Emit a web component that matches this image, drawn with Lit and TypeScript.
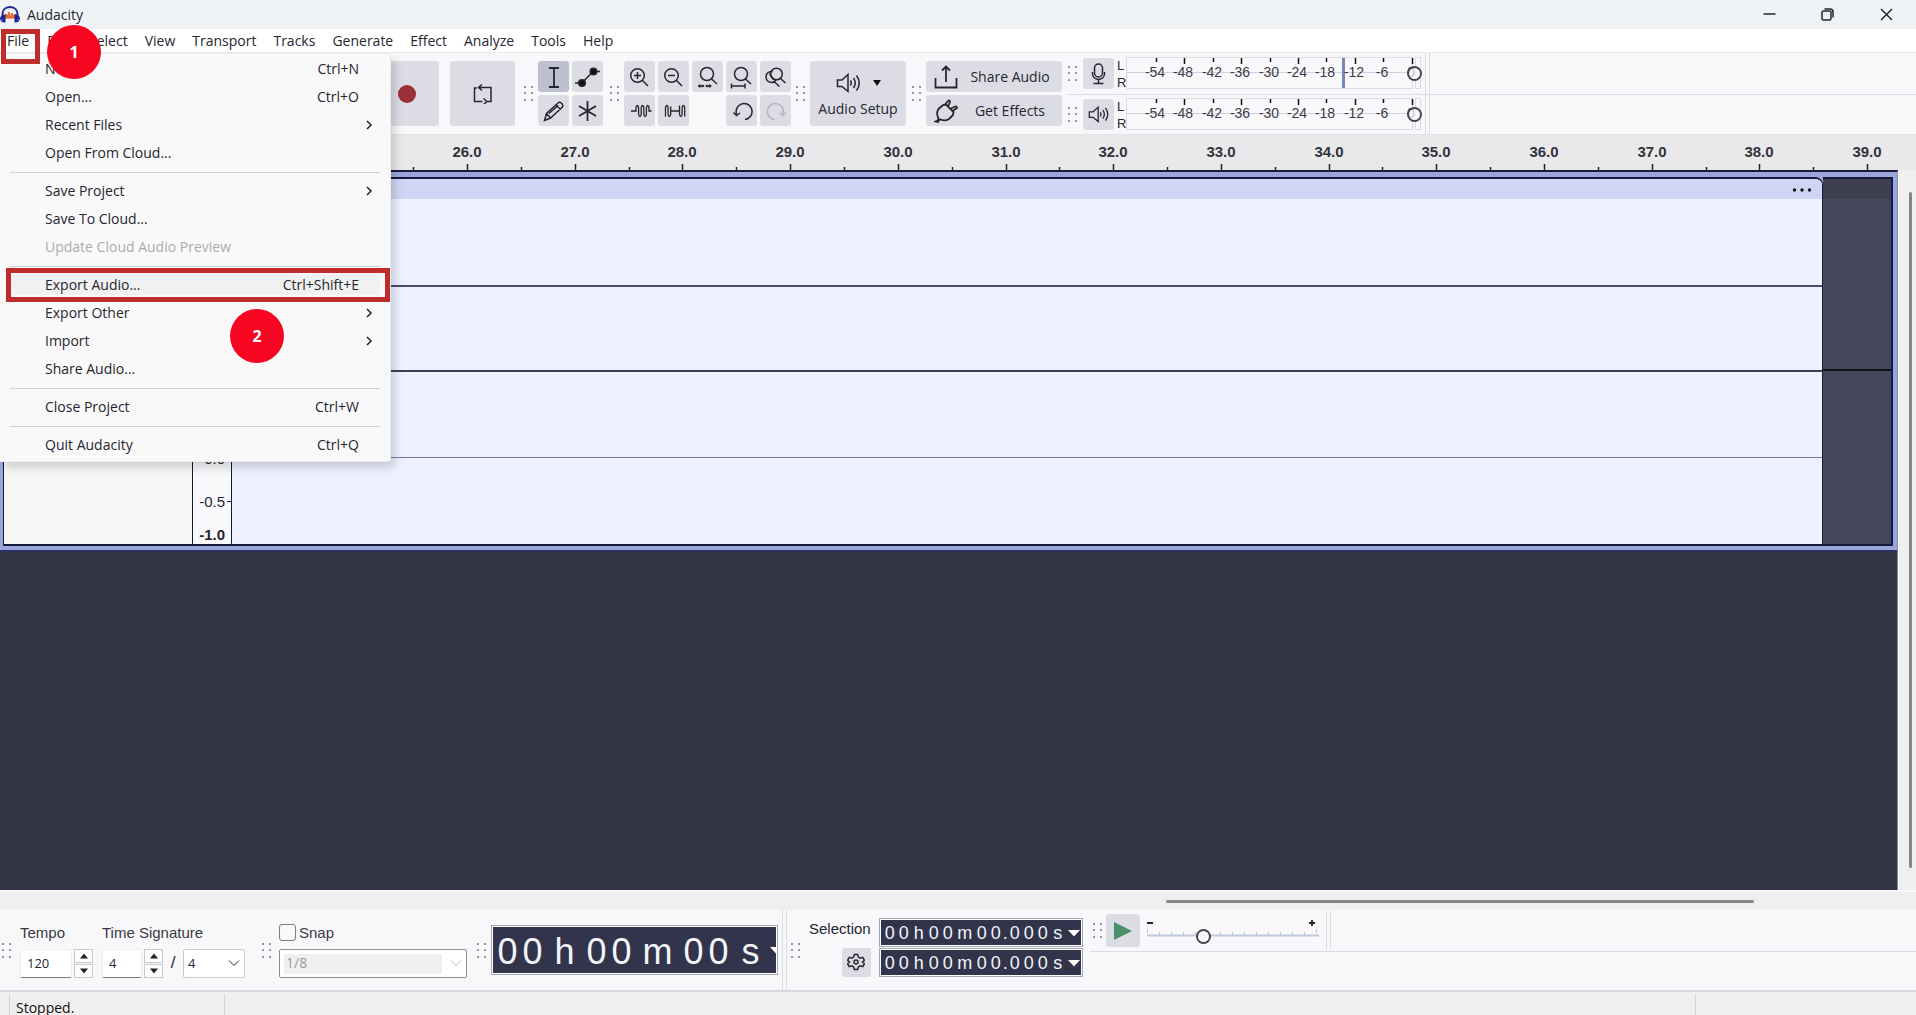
import { LitElement, html, svg, css, nothing } from "lit";
import { customElement, property } from "lit/decorators.js";

type Entry = { label: string; keys?: string; sub?: boolean; off?: boolean; hot?: boolean };

const FILE_MENU: Entry[][] = [
  [
    { label: "New", keys: "Ctrl+N" },
    { label: "Open...", keys: "Ctrl+O" },
    { label: "Recent Files", sub: true },
    { label: "Open From Cloud..." },
  ],
  [
    { label: "Save Project", sub: true },
    { label: "Save To Cloud..." },
    { label: "Update Cloud Audio Preview", off: true },
  ],
  [
    { label: "Export Audio...", keys: "Ctrl+Shift+E", hot: true },
    { label: "Export Other", sub: true },
    { label: "Import", sub: true },
    { label: "Share Audio..." },
  ],
  [{ label: "Close Project", keys: "Ctrl+W" }],
  [{ label: "Quit Audacity", keys: "Ctrl+Q" }],
];

const MENUS = ["File", "Edit", "Select", "View", "Transport", "Tracks", "Generate", "Effect", "Analyze", "Tools", "Help"];

const icon = (w: number, h: number, body: unknown) =>
  html`<svg class="icon" width=${w} height=${h} viewBox="0 0 ${w} ${h}" aria-hidden="true">${body}</svg>`;

const grip = () =>
  html`<svg class="grip" width="9" height="15" viewBox="0 0 9 15" aria-hidden="true">
    ${[1, 8].map((x) => [1, 7, 14].map((y) => svg`<circle cx=${x} cy=${y} r="1.1" fill="#85859a" />`))}
  </svg>`;

const speaker = svg`<path d="M1.5 8v6.500h4.500l6 5V2.500l-6 5.500z" />
  <path d="M14.500 8.500q1.500 2.500 0 5M17.500 6q3.500 5 0 10M20.500 3.500q5.500 7.500 0 15" />`;

const ICONS = {
  select: svg`<path d="M11 7h4.500l.5 1 .5-1H21M16 8v17M11 26h4.500l.5-1 .5 1H21" stroke-width="1.8" />`,
  envelope: svg`<path d="M3 22h7L21 10.500h7" /><circle cx="10" cy="22" r="3.300" fill="#111" /><circle cx="21.500" cy="10.500" r="3.300" fill="#111" />`,
  draw: svg`<path d="M6.500 25.500l2-7L20 8q1.500-1.300 3.200 0l1 1q1.300 1.700 0 3.200L12.500 23zM8.500 18.500l4 4.500M18 10l4.500 4.500M11 18.500L20 10.500" />`,
  multi: svg`<path d="M15.500 6v20M7 11l17 10M24 11L7 21" stroke-width="1.800" />`,
  zoomIn: svg`<circle cx="13.500" cy="14.500" r="6.800" /><path d="M18.500 19.500l5.500 5.500M10 14.500h7M13.500 11v7" />`,
  zoomOut: svg`<circle cx="13.500" cy="14.500" r="6.800" /><path d="M18.500 19.500l5.500 5.500M10 14.500h7" />`,
  fitSel: svg`<circle cx="15" cy="13" r="6.500" /><path d="M19.500 18l5.500 5M6.500 25h5.500M14 25h5" /><path d="M5.500 25l3-2v4zM20 25l-3-2v4zM12.500 25l-2.500-1.500v3zM13 25l2.500-1.500v3z" fill="#222" stroke="none" />`,
  fitAll: svg`<circle cx="15" cy="13" r="6.500" /><path d="M19.500 18l5.500 5M5.500 25h13.500M5.500 22.500v5M19 22.500v5" />`,
  toggle: svg`<circle cx="16.500" cy="13" r="5.800" /><path d="M20.500 17.500l5 4.500M12.500 10.500q-6 0-6.500 5 0 5.500 5.500 6 3 0 4.500-2.500M14 20.500l5.500 5M9.500 12.500l4 6" />`,
  trim: svg`<path d="M7 16h5v-3.500q1.300-4 2.600 0v7q1.300 4 2.600 0v-7q1.300-4 2.600 0v7q1.300 4 2.600 0v-7q1.300-4 2.600 0V16h2.600" stroke-width="1.300" />`,
  silence: svg`<path d="M7.500 21.500v-9q1.300-4 2.600 0v7q1.300 4 2.600 0v-8M13 16h8.500M21.500 10.500v9q1.300 4 2.600 0v-7q1.300-4 2.600 0v9" stroke-width="1.300" />`,
  undo: svg`<path d="M10.500 19a8 8 0 1 1 11.500 4.500q-1.500.8-3 .8M7.500 17.500l3 3 3.500-2.500" />`,
  redo: svg`<path d="M23 19a8 8 0 1 0-11.500 4.500q1.500.8 3 .8M26 17.500l-3 3-3.500-2.500" stroke="#b3b5bf" />`,
  mic: svg`<rect x="11.500" y="6" width="8" height="13" rx="4" /><path d="M9.500 14v2q.5 5 6 5.500 5.500-.5 6-5.500v-2M15.500 21.500V25M10.500 25.500h10" />`,
};

@customElement("app-root")
export class AppRoot extends LitElement {
  @property({ type: Number }) start = 25;

  private tool(name: keyof typeof ICONS, label: string, on = false, off = false) {
    return html`<button class="btn tool ${on ? "on" : ""}" aria-label=${label} ?disabled=${off}>${icon(31, 31, ICONS[name])}</button>`;
  }

  private menuBar() {
    return html`<nav class="menubar" aria-label="Main menu">
      ${MENUS.map((m) => html`<button class="menu-name">${m}</button>`)}
      <div class="popup" role="menu">
        ${FILE_MENU.map(
          (group, i) => html`${i ? html`<hr class="sep" />` : nothing}
          ${group.map(
            (e) => html`<button role="menuitem" class="item ${e.hot ? "hot" : ""}" ?disabled=${e.off}>
              <span>${e.label}</span><span>${e.keys ?? ""}</span>
              <span class="sub">${e.sub ? icon(8, 12, svg`<path d="M2 2l4 4-4 4" />`) : nothing}</span>
            </button>`
          )}`
        )}
      </div>
      <span class="mark-file"></span>
      <span class="badge one">1</span>
      <span class="badge two">2</span>
    </nav>`;
  }

  private meter(name: string, glyph: unknown, peak: boolean) {
    const labels = [-54, -48, -42, -36, -30, -24, -18, -12, -6, 0];
    return html`<div class="meter-row">
      ${grip()}
      <button class="btn tool" aria-label="${name} level">${glyph}</button>
      <div class="lr"><span>L</span><span>R</span></div>
      <div class="meter">
        <svg width="296" height="33" viewBox="0 0 296 33" aria-hidden="true">
          <path d="M.5.500h286v31H.5zM289.500.500h5v31h-5z" fill="#f9f9fb" stroke="#d9dae2" />
          <path d="M0 15.500h286" stroke="#cfd3e0" />
          ${peak ? svg`<path d="M217.500 1v30" stroke="#7686b8" stroke-width="3" />` : nothing}
          ${labels.map((v, i) => {
            const x = Math.round(30 + i * 28.4);
            return svg`<path d="M${x + 0.5} 1v${v % 12 ? 4 : 6}" stroke="#111" stroke-width="1.500" />
              <text class="db" x=${x - 1} y="20" text-anchor="middle">${v}</text>`;
          })}
        </svg>
        <input class="knob" type="range" aria-label="${name} volume" value="100" />
      </div>
    </div>`;
  }

  private toolbar() {
    return html`<section class="toolbar">
      <div class="group transport">
        ${grip()}
        <div class="big-row">
          <button class="btn big" aria-label="Pause">${icon(20, 20, svg`<path d="M6 3v14M14 3v14" />`)}</button>
          <button class="btn big" aria-label="Play">${icon(20, 20, svg`<path d="M5 3l11 7-11 7z" />`)}</button>
          <button class="btn big" aria-label="Stop">${icon(20, 20, svg`<path d="M4 4h12v12H4z" />`)}</button>
          <button class="btn big" aria-label="Skip to Start">${icon(20, 20, svg`<path d="M4 3v14M16 3L6 10l10 7z" />`)}</button>
          <button class="btn big" aria-label="Skip to End">${icon(20, 20, svg`<path d="M16 3v14M4 3l10 7-10 7z" />`)}</button>
          <button class="btn big" aria-label="Record">${icon(20, 20, svg`<circle cx="10" cy="10" r="9" fill="#9b3038" stroke="none" />`)}</button>
        </div>
        <button class="btn big" aria-label="Loop">
          ${icon(20, 20, svg`<path d="M4 4H1.500v13.500h8M14.500 17.500h3.500V3.500H6M9 .5l-3.500 3L9 6.500M10.500 14.500l3.500 3-3.500 3" />`)}
        </button>
      </div>
      ${grip()}
      <div class="tools two-col">
        ${this.tool("select", "Selection Tool", true)}${this.tool("envelope", "Envelope Tool")}
        ${this.tool("draw", "Draw Tool")}${this.tool("multi", "Multi-Tool")}
      </div>
      ${grip()}
      <div class="tools five-col">
        ${this.tool("zoomIn", "Zoom In")}${this.tool("zoomOut", "Zoom Out")}${this.tool("fitSel", "Fit Selection")}
        ${this.tool("fitAll", "Fit Project")}${this.tool("toggle", "Zoom Toggle")}
        ${this.tool("trim", "Trim")}${this.tool("silence", "Silence")}<span></span>
        ${this.tool("undo", "Undo")}${this.tool("redo", "Redo", false, true)}
      </div>
      ${grip()}
      <button class="btn setup">
        <span class="setup-icons">${icon(26, 22, speaker)}${icon(8, 8, svg`<path d="M0 1h8L4 7z" fill="#111" stroke="none" />`)}</span>
        Audio Setup
      </button>
      ${grip()}
      <div class="share">
        <button class="btn wide">
          ${icon(24, 24, svg`<path d="M1.500 13v9.500h21V13M12 17V1.500M8 5.500l4-4 4 4" stroke-width="1.800" />`)}<span>Share Audio</span>
        </button>
        <button class="btn wide">
          ${icon(24, 24, svg`<path d="M1.500 22.500q3-1 3-3Q1.500 13 5 9.500L9 6l3-.500 7.500 7.500-.500 3-4 4q-4 2.500-8.500.500-2 0-2.500 2.500zM11 5.500l3.500-4q1.500-.5 1.500 1.500l-2 4.500M18.500 12l4.500-3q0-2-2-1.500l-4 2" stroke-width="1.800" />`)}<span>Get Effects</span>
        </button>
      </div>
      <div class="meters">
        <div class="meters-line">${this.meter("Recording", icon(31, 31, ICONS.mic), true)}</div>
        <div class="meters-line">${this.meter("Playback", icon(22, 20, svg`<g transform="scale(.85)">${speaker}</g>`), false)}</div>
      </div>
    </section>`;
  }

  /** Seconds scale: one long tick per second, one short tick between. */
  private ruler() {
    const marks = Array.from({ length: 30 }, (_, i) => this.start + i * 0.5);
    return html`<svg class="ruler" width="100%" height="36" aria-hidden="true">
      ${marks.map((t) => {
        const x = Math.round(467 + (t - 26) * 107.7);
        const whole = Number.isInteger(t);
        return svg`<path d="M${x + 0.5} ${whole ? 29 : 32}V36" stroke="#222" stroke-width="1.500" />
          ${whole ? svg`<text class="sec" x=${x} y="22" text-anchor="middle">${t.toFixed(1)}</text>` : nothing}`;
      })}
    </svg>`;
  }

  private tracks() {
    return html`<section class="workspace">
      <div class="canvas">
        <div class="track">
          <div class="panel"></div>
          <div class="scale"><span>0.0</span><span class="half">-0.5</span><span class="min">-1.0</span></div>
          <div class="clip">
            <div class="clip-head">
              <button class="dots" aria-label="Clip menu">${icon(20, 6, svg`<g fill="#111" stroke="none"><circle cx="2.500" cy="3" r="1.700" /><circle cx="10" cy="3" r="1.700" /><circle cx="17.500" cy="3" r="1.700" /></g>`)}</button>
            </div>
            <div class="wave mid"></div><div class="wave end"></div>
            <div class="wave thin"></div><div class="wave"></div>
          </div>
          <div class="empty"><div class="empty-head"></div><div class="empty-half"></div></div>
        </div>
      </div>
      <div class="vbar"><div class="vthumb"></div></div>
      <div class="hbar"><div class="hthumb"></div></div>
    </section>`;
  }

  private digits(text: string) {
    return [...text].map((c) => html`<span class=${c === "." ? "dot" : c === "m" ? "m" : /\d/.test(c) ? "d" : "u"}>${c}</span>`);
  }

  private time(text: string, cls: string, label: string) {
    return html`<div class="time ${cls}" role="timer" aria-label=${label}>
      ${this.digits(text)}
      <button class="drop" aria-label="${label} format">${icon(12, 8, svg`<path d="M0 1h12L6 7.500z" fill="#fff" stroke="none" />`)}</button>
    </div>`;
  }

  private spinner(label: string) {
    return html`<div class="spinner">
      <button aria-label="Increase ${label}">${icon(8, 6, svg`<path d="M0 5.500h8L4 .5z" fill="#222" stroke="none" />`)}</button>
      <button aria-label="Decrease ${label}">${icon(8, 6, svg`<path d="M0 .5h8L4 5.500z" fill="#222" stroke="none" />`)}</button>
    </div>`;
  }

  private bottom() {
    const chevron = icon(12, 8, svg`<path d="M1 1.500l5 5 5-5" />`);
    return html`<section class="bottom">
      ${grip()}
      <div class="field tempo">
        <label for="tempo">Tempo</label>
        <div class="row"><input id="tempo" class="num wide-num" value="120" />${this.spinner("tempo")}</div>
      </div>
      <div class="field sig">
        <label for="beats">Time Signature</label>
        <div class="row">
          <input id="beats" class="num" value="4" />${this.spinner("beats")}
          <span class="slash">/</span>
          <div class="pick"><select aria-label="Beat unit"><option>4</option></select>${chevron}</div>
        </div>
      </div>
      ${grip()}
      <div class="field snap">
        <label class="check"><input type="checkbox" />Snap</label>
        <div class="pick off"><select aria-label="Snap to" disabled><option>1/8</option></select>${chevron}</div>
      </div>
      ${grip()}
      ${this.time("00h00m00s", "large", "Time")}
      <div class="divider"></div>
      ${grip()}
      <div class="selection">
        <div class="sel-side"><span>Selection</span>
          <button class="gear" aria-label="Selection options">
            ${icon(18, 18, svg`<path d="M7.300 1.500h3.400l.7 2.600 1.800 1 2.500-.7 1.700 2.900-1.900 1.700v0l1.900 1.700-1.700 2.900-2.500-.7-1.800 1-.7 2.600H7.300l-.7-2.600-1.800-1-2.500.7-1.700-2.900L2.500 9 .6 7.300l1.700-2.900 2.500.7 1.800-1z" /><circle cx="9" cy="9" r="2" />`)}
          </button>
        </div>
        <div class="sel-times">
          ${this.time("00h00m00.000s", "small", "Selection start")}${this.time("00h00m00.000s", "small", "Selection end")}
        </div>
      </div>
      <div class="tail">
        <div class="speed">
          ${grip()}
          <button class="btn play" aria-label="Play at speed">${icon(18, 18, svg`<path d="M0 0l18 9L0 18z" fill="#4b8f6b" stroke="none" />`)}</button>
          <div class="rate">
            <svg width="172" height="33" viewBox="0 0 172 33" aria-hidden="true">
              <path d="M0 9h6M162 9h6M165 6v6" stroke="#222" stroke-width="1.800" />
              <path d="M0 21.500h172" stroke="#c0c9de" stroke-width="2" />
              ${Array.from({ length: 15 }, (_, i) => svg`<path d="M${0.5 + Math.round(i * 12.1)} ${i % 14 ? 18 : 15}v4" stroke="#c0c9de" />`)}
            </svg>
            <input class="knob" type="range" aria-label="Playback speed" value="33" />
          </div>
          <div class="divider short"></div>
        </div>
        <div class="tail-rest"></div>
      </div>
    </section>`;
  }

  render() {
    return html`
      <header class="titlebar">
        <svg width="20" height="18" viewBox="0 0 20 18" aria-hidden="true">
          <path d="M4 10l2-2 1 3 2-5 1.500 6 1.500-5 1.500 3 2-2v4H4z" fill="#f0772b" stroke="#e8552a" />
          <path d="M2.500 10C2 4 5 1 10 1s8 3 7.500 9" fill="none" stroke="#20249a" stroke-width="1.800" />
          <path d="M5.500 8.500v8q-5 .5-5.500-4 .5-4 5.500-4zM14.500 8.500v8q5 .5 5.500-4-.5-4-5.500-4z" fill="#1d2290" />
          <path d="M2 13v2M18 13v2" stroke="#7f8be0" />
        </svg>
        <span class="title">Audacity</span>
        <button aria-label="Minimize">${icon(13, 13, svg`<path d="M.5 6h12" />`)}</button>
        <button aria-label="Restore">${icon(13, 13, svg`<rect x="1" y="3" width="9" height="9" rx="1.500" /><path d="M3.500 1H9q3 0 3 3v5.500" />`)}</button>
        <button aria-label="Close">${icon(13, 13, svg`<path d="M1 1l11 11M12 1L1 12" />`)}</button>
      </header>
      ${this.menuBar()} ${this.toolbar()} ${this.ruler()} ${this.tracks()} ${this.bottom()}
      <footer class="status"><span class="cell gap"></span><span class="cell state">Stopped.</span><span class="cell grow"></span><span class="cell last"></span></footer>
    `;
  }

  static styles = css`
    :host {
      display: flex;
      flex-direction: column;
      min-height: 100vh;
      overflow: hidden;
      background: #f8f8fa;
      color: #262630;
      font-family: "Open Sans", "Noto Sans", sans-serif;
      font-size: 14px;
      line-height: 20px;
    }
    * { box-sizing: border-box; }
    button { font: inherit; color: inherit; border: 0; padding: 0; background: none; }
    input, select { font: inherit; color: inherit; margin: 0; }
    svg { display: block; flex: none; }
    .icon { fill: none; stroke: #26262e; stroke-width: 1.5; }
    label { color: #3a3a44; }

    .titlebar { display: flex; align-items: center; height: 29px; background: #eff3f6; }
    .title { margin-left: 7px; flex: 1; }
    .titlebar button { display: grid; place-items: center; width: 58px; height: 29px; }
    .titlebar button:last-child { width: 60px; }

    .menubar { position: relative; z-index: 2; display: flex; height: 23px; background: #fff; }
    .menu-name { padding: 0 8px 0 9px; line-height: 24px; white-space: nowrap; }
    .menu-name:first-child { padding: 0 9px 0 7px; }
    .popup {
      position: absolute; left: 0; top: 24px; width: 391px; padding: 1px 4px 2px;
      background: #f9f9f9; border: 1px solid #ececee; border-left: 0; border-radius: 0 4px 4px 0;
      box-shadow: 4px 6px 10px rgba(0, 0, 0, 0.16);
    }
    .item {
      position: relative; display: grid; grid-template-columns: 1fr auto 27px; align-items: center;
      width: 100%; height: 28px; padding-left: 41px; text-align: left;
    }
    .item:disabled { color: #acacac; }
    .sub { padding-left: 6px; }
    .sep { height: 1px; margin: 5px 6px 4px; border: 0; background: #d0d0d2; }
    .hot { background: linear-gradient(#f1f1f1, #f1f1f1) 6px 4px / 370px 20px no-repeat; }
    .hot::after { content: ""; position: absolute; inset: -3px -4px -3px 2px; border: 5px solid #bf2c2c; }
    .mark-file { position: absolute; left: 1px; top: 0; width: 39px; height: 35px; border: 5px solid #bf2c2c; }
    .badge {
      position: absolute; display: grid; place-items: center; width: 54px; height: 54px; border-radius: 50%;
      background: #f80522; color: #fff; font-weight: 700; font-size: 16px;
    }
    .one { left: 47px; top: -4px; }
    .two { left: 230px; top: 280px; }

    .toolbar { display: flex; align-items: center; height: 82px; border-top: 1px solid #ececf0; }
    .group, .big-row { display: flex; align-items: center; }
    .transport { padding-left: 3px; margin-right: 9px; }
    .big-row { gap: 5px; margin: 0 11px 0 12px; }
    .btn { display: grid; place-items: center; border-radius: 3px; background: #dcdde4; }
    .btn.on { background: #bcc0d0; }
    .big { width: 65px; height: 65px; }
    .tools { display: grid; gap: 3px; margin: 0 7px 0 5px; }
    .two-col { grid-template-columns: repeat(2, 31px); }
    .five-col { grid-template-columns: repeat(5, 31px); margin-right: 5px; }
    .tool { width: 31px; height: 31px; }
    .setup { width: 96px; height: 65px; padding: 9px 0 5px; margin: 0 6px 0 5px; }
    .setup-icons { display: flex; align-items: center; gap: 11px; }
    .share { display: grid; gap: 3px; margin-left: 5px; }
    .wide { grid-template-columns: 24px 1fr; width: 136px; height: 31px; padding: 0 8px; column-gap: 8px; }
    .meters { flex: 1; align-self: flex-start; margin-left: 5px; }
    .meters-line { display: flex; height: 41px; }
    .meters-line + .meters-line { border-top: 1px solid #dcdce4; height: 40px; }
    .meter-row { display: flex; align-items: center; padding: 0 4px 0 1px; border-right: 1px solid #dcdce4; box-shadow: 3px 0 0 #f8f8fa, 4px 0 0 #dcdce4; }
    .meter-row .btn { margin: 0 3px 0 6px; }
    .lr { display: grid; width: 9px; font: 13px/17px "Liberation Sans", sans-serif; }
    .meter { display: grid; width: 295px; }
    .meter svg, .meter input { grid-area: 1 / 1; }
    .db { font: 14px "Liberation Sans", sans-serif; fill: #3a3a46; }
    .knob { appearance: none; align-self: center; height: 18px; background: none; }
    .knob::-webkit-slider-thumb { appearance: none; width: 15px; height: 15px; border: 2px solid #44464c; border-radius: 50%; background: rgba(255, 255, 255, 0.7); }
    .meter .knob { width: 296px; }

    .ruler { background: #e9e9ec; border-top: 1px solid #e2e2e6; }
    .sec { font: 700 15px "Liberation Sans", sans-serif; fill: #33333b; }

    .workspace { flex: 1; display: grid; grid-template: 1fr 20px / 1fr 18px; background: #efefef; }
    .canvas { background: #313545; border-top: 2px solid #141a38; border-right: 1px solid #8a8a92; }
    .track {
      display: flex; height: 380px; padding: 5px 4px 4px 3px; background: #9aa6dc;
      border-bottom: 2px solid #2b3260;
    }
    .track > * { border-top: 2px solid #141a38; border-bottom: 2px solid #141a38; }
    .panel { width: 189px; background: #f7f7f8; border-left: 1px solid #141a38; }
    .scale {
      display: flex; flex-direction: column; justify-content: flex-end; width: 40px; padding-right: 6px;
      background: #f9f9fb; border-left: 1px solid #141a38; border-right: 1px solid #141a38;
      font: 15px/17px "Liberation Sans", sans-serif; text-align: right; gap: 26px;
    }
    .half { background: linear-gradient(#141a38, #141a38) 100% 8px / 4px 1px no-repeat; margin-right: -6px; padding-right: 6px; }
    .min { font-weight: 700; margin-top: -10px; margin-bottom: 1px; }
    .clip { flex: 1; display: flex; flex-direction: column; border-right: 1px solid #141a38; border-radius: 0 8px 0 0; background: #eef1ff; }
    .clip-head { display: flex; justify-content: flex-end; align-items: center; height: 20px; padding: 2px 10px 0 0; background: #cfd6f4; border-radius: 0 6px 0 0; }
    .wave { flex: 1; }
    .mid { border-bottom: 2px solid #4a4c6c; }
    .wave.end { flex: 0 0 85px; border-bottom: 2px solid #3e4050; }
    .thin { border-bottom: 1px solid #75789a; }
    .empty { width: 70px; display: flex; flex-direction: column; background: #45475b; border-right: 2px solid #141a50; }
    .empty-head { height: 20px; background: #3e4052; }
    .empty-half { height: 172px; border-bottom: 2px solid #14141c; }
    .vbar { padding: 22px 4px 5px 10px; border-left: 1px solid #fff; }
    .vthumb { width: 3px; height: 676px; background: #868686; border-radius: 2px; }
    .hbar { grid-column: 1 / -1; padding-top: 8px; border-top: 2px solid #fafafa; display: flex; justify-content: flex-end; padding-right: 162px; }
    .hthumb { width: 588px; height: 3px; background: #868686; border-radius: 2px; }

    .bottom {
      display: flex; align-items: center; height: 82px; padding-left: 2px;
      border-bottom: 2px solid #d9dae0; font-family: "Liberation Sans", sans-serif; font-size: 15px;
    }
    .field { display: grid; gap: 6px; }
    .tempo { margin-left: 9px; }
    .sig { margin: 0 17px 0 9px; }
    .row { display: flex; align-items: center; }
    .num, .pick, .time { font-family: "Open Sans", sans-serif; }
    .num { width: 40px; height: 29px; padding: 0 6px; font-size: 13px; background: #fff; border: 1px solid #ececec; border-bottom: 1px solid #7a7a7a; border-radius: 2px; }
    .wide-num { width: 52px; }
    .spinner { display: grid; gap: 1px; margin-left: 2px; width: 19px; }
    .spinner button { display: grid; place-items: center; height: 14px; border: 1px solid #c9c9cd; background: #fdfdfd; }
    .slash { width: 20px; text-align: center; font-size: 17px; }
    .pick { display: grid; align-items: center; width: 62px; height: 29px; background: #fff; border: 1px solid #c9c9cd; border-radius: 2px; font-size: 13px; }
    .pick > * { grid-area: 1 / 1; }
    .pick select { appearance: none; width: 100%; height: 100%; padding: 0 4px; border: 0; background: none; }
    .pick svg { justify-self: end; margin-right: 4px; stroke-width: 1; }
    .snap { margin: 0 10px 0 8px; }
    .off { width: 188px; border-color: #8c8c92; }
    .pick.off select { background: linear-gradient(#f0f0f0, #f0f0f0) 4px 4px / 158px 20px no-repeat; color: #9a9a9a; opacity: 1; padding-left: 6px; font-size: 14px; }
    .off svg { stroke: #b9b9b9; }
    .check { display: flex; align-items: center; gap: 3px; }
    .check input { appearance: none; width: 17px; height: 17px; border: 1px solid #7d7d82; border-radius: 3px; background: #fafafa; }
    .time {
      display: flex; align-items: center; background: #31344a; color: #f3f3fa;
      border: 1px solid #a5a7b4; box-shadow: inset 0 0 0 1px #fff; font-family: "Liberation Sans", sans-serif; text-align: center; overflow: hidden;
    }
    .time > * { flex: none; }
    .large { width: 287px; height: 50px; margin: 0 4px 0 5px; padding-left: 3px; font-size: 36px; }
    .large span { padding-top: 4px; }
    .large .d { width: 25px; }
    .large .u { width: 39px; }
    .large .m { width: 47px; }
    .small { width: 204px; height: 29px; padding-left: 3px; font-size: 18px; }
    .small .d { width: 14px; }
    .small .u { width: 16px; }
    .small .m { width: 20px; }
    .small .dot { width: 5px; }
    .small .drop { margin-left: 2px; }
    .divider { width: 5px; height: 80px; margin-right: 4px; border: 1px solid #dcdce4; border-width: 0 1px; }
    .selection { display: flex; align-items: center; gap: 8px; margin: 0 0 5px 9px; }
    .sel-side { display: grid; justify-items: end; align-content: space-between; height: 58px; }
    .gear { display: grid; place-items: center; width: 29px; height: 29px; background: #dcdde4; border-radius: 2px; }
    .sel-times { display: grid; gap: 1px; }
    .tail { flex: 1; display: flex; flex-direction: column; height: 80px; margin-left: 7px; }
    .speed { display: flex; align-items: center; height: 41px; padding-left: 3px; }
    .tail-rest { flex: 1; border-top: 1px solid #dcdce4; }
    .play { width: 34px; height: 33px; margin: 0 7px 0 4px; }
    .rate { display: grid; width: 172px; }
    .rate > * { grid-area: 1 / 1; }
    .rate svg { align-self: center; }
    .rate .knob { width: 186px; margin: 11px 0 0 -7px; }
    .short { height: 39px; margin-left: 7px; }

    .status { display: flex; height: 23px; background: #efefef; font-size: 14px; }
    .cell { border-right: 1px solid #d4d4d6; margin-top: 2px; }
    .gap { width: 10px; }
    .state { width: 215px; padding-left: 6px; line-height: 28px; height: 21px; overflow: hidden; color: #111; }
    .grow { flex: 1; }
    .last { width: 220px; border: 0; }
  `;
}
